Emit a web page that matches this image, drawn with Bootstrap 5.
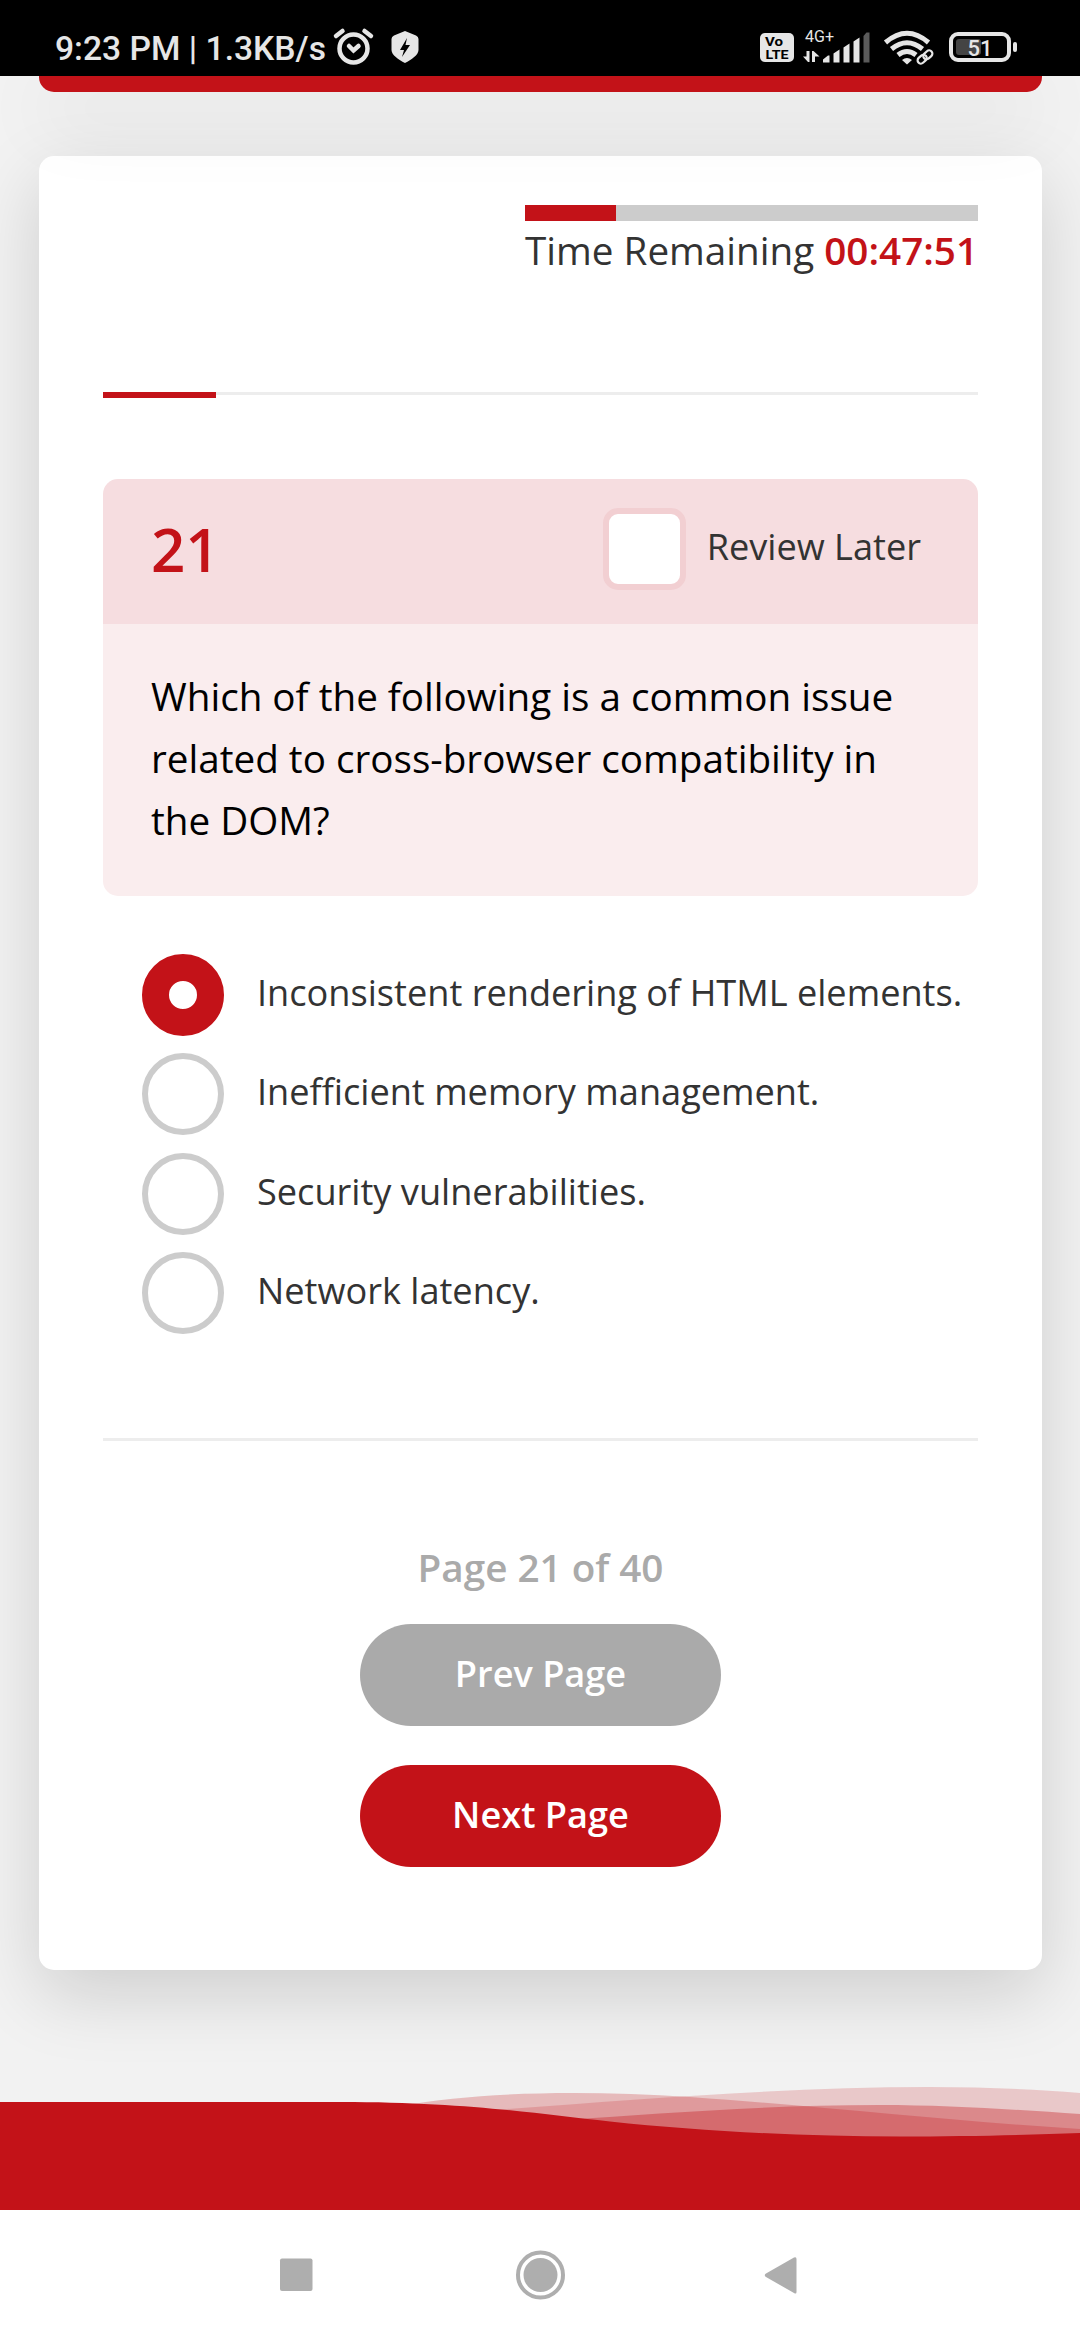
<!DOCTYPE html>
<html lang="en">
<head>
<meta charset="utf-8">
<meta name="viewport" content="width=device-width, initial-scale=1">
<title>Assessment</title>
<link href="https://cdn.jsdelivr.net/npm/bootstrap@5.3.0/dist/css/bootstrap.min.css" rel="stylesheet">
<style>
:root{--brand:#c31218;--muted:#aaa;--lift:0 24px 72px rgba(0,0,0,.15)}
body{width:1080px;height:2340px;overflow:hidden;background:#f2f2f2;font-family:"Open Sans",sans-serif;font-size:36.15px;color:#333;line-height:54px}
svg{display:block;flex:none}
.statusbar{height:76px;background:#000;z-index:3}
.statusbar svg{font-family:Roboto,sans-serif}
.topstrip{height:16px;margin:0 38px 0 39px;background:var(--brand);border-radius:0 0 15px 15px;box-shadow:var(--lift);z-index:2}
.quiz{height:1814px;margin:64px 38px 0 39px;padding:49px 64px 0;border-radius:15px;box-shadow:var(--lift)}
.timer{width:453px;font-size:38.65px;line-height:60px}
.timer .progress{--bs-progress-height:16px;--bs-progress-bg:#ccc;--bs-progress-bar-bg:var(--brand);--bs-progress-border-radius:0}
.timer-text{margin-top:-1px}
.timer strong,.brandtext{color:var(--brand);font-weight:600}
.steps{height:6px;margin-top:112px;border-top:3px solid #ededed}
.steps div{height:6px;margin-top:-3px;background:var(--brand)}
.question{margin-top:81px;border-radius:15px}
.question-head{height:145px;padding:0 57px 6px 48px;background:#f6dde0}
.num{font-size:60px;line-height:1}
.question .form-check-input{width:83px;height:82px;border:6px solid #f2cfd2;border-radius:15px;margin:0 21px 0 0}
.question-body{height:272px;padding:41px 48px 0;background:#faedee;color:#000;font-size:38.65px;line-height:62px}
.answers{margin:58px 0 0 39px}
.answers label{height:82px;margin-bottom:17.4px}
.answers .form-check-input{width:82px;height:82px;border:6px solid #ccc;margin:0 33px 0 0;flex:none}
.answers .form-check-input:checked{border:27px solid var(--brand);background:#fff}
.lbl{margin-top:-6px}
.rule{height:3px;margin-top:86px;background:#ededed}
.pageno{margin-top:96px;font-size:38.65px;line-height:60px;font-weight:600;color:var(--muted)}
.pill{--bs-btn-color:#fff;--bs-btn-bg:var(--brand);--bs-btn-border-width:0;--bs-btn-font-weight:600;--bs-btn-font-size:36.15px;--bs-btn-padding-y:0;width:361px;height:102px;padding-bottom:2px}
.pill-muted{--bs-btn-bg:var(--muted);margin:27px 0 39px}
.waves{height:140px;margin-top:100px}
.navkeys{height:130px;background:#fff}
</style>
</head>
<body>
<header class="statusbar position-relative">
<svg width="1080" height="76" fill="#e6e6e6">
<text x="55" y="60" font-size="33.5" font-weight="500" textLength="271" lengthAdjust="spacingAndGlyphs">9:23 PM | 1.3KB/s</text>
<g fill="none" stroke="#e6e6e6" stroke-width="4.500" stroke-linecap="round"><circle cx="353.500" cy="48.500" r="14"/><path d="M349 46l4.500 4.500 5-4.500M336 36l6.500-5M371 36l-6.500-5"/></g>
<path d="M405 31l11 4.500q2.500 1 2.500 3.500v11c0 5-7 9.500-13.500 13-6.500-3.500-13.500-8-13.500-13v-11q0-2.500 2.500-3.500z"/><path d="M407 38l-7 12h4l-2 7 8-12h-4.500z" fill="#000"/>
<rect x="760" y="33" width="34" height="29" rx="5"/>
<g fill="#000" font-weight="700" font-size="12.500"><text x="765" y="46" textLength="18" lengthAdjust="spacingAndGlyphs">Vo</text><text x="765.500" y="59" textLength="23" lengthAdjust="spacingAndGlyphs">LTE</text></g>
<text x="805" y="42" font-size="16" textLength="29" lengthAdjust="spacingAndGlyphs">4G+</text>
<path d="M803 56.500h3.500v-5.500h3v11h-1.500zM812 62v-11h1.500l6 5.500h-4.500v5.500z"/>
<path d="M823 62.500v-3l5-4h1.500v7zM833.500 62.500v-9l6-4v13zM843.500 62.500v-15l6-4v19zM853.500 62.500v-21l6-4v25z"/><path d="M863.500 62.500v-26.500l3-3.500h3v30z" fill="#5b5b5b"/>
<g fill="none" stroke="#e6e6e6" stroke-width="5"><path d="M885.500 42.500q21.500-18.500 43 0M891.500 49q15.500-12.500 31 0M898 55q9-7 18 0"/></g><path d="M902 60q5-4 10 0l-5 4.500z"/>
<circle cx="926" cy="58" r="7.500" fill="#000"/>
<g fill="none" stroke="#e6e6e6" stroke-width="2.200"><rect x="917" y="56" width="10" height="6.500" rx="3.250" transform="rotate(-42 922 59)"/><rect x="923" y="51.500" width="10" height="6.500" rx="3.250" transform="rotate(-42 928 55)"/></g>
<rect x="951" y="34" width="58" height="26" rx="7" fill="none" stroke="#e6e6e6" stroke-width="4"/><rect x="956" y="39" width="25" height="16" rx="3" fill="#444"/><rect x="1013" y="42" width="4" height="10" rx="2"/>
<text x="967.500" y="55.500" font-size="22" font-weight="500">51</text>
</svg>
</header>
<div class="topstrip position-relative"></div>
<main class="quiz card border-0">
<div class="timer ms-auto">
<div class="progress"><div class="progress-bar" style="width:20%"></div></div>
<div class="timer-text text-nowrap">Time Remaining <strong>00:47:51</strong></div>
</div>
<div class="steps"><div style="width:12.9%"></div></div>
<section class="question overflow-hidden">
<div class="question-head d-flex justify-content-between align-items-center">
<div class="num brandtext">21</div>
<label class="d-flex align-items-center"><input class="form-check-input" type="checkbox"><span class="lbl">Review Later</span></label>
</div>
<div class="question-body">Which of the following is a common issue related to cross-browser compatibility in the DOM?</div>
</section>
<div class="answers d-flex flex-column">
<label class="d-flex align-items-center"><input class="form-check-input" type="radio" name="answer" checked><span class="lbl">Inconsistent rendering of HTML elements.</span></label>
<label class="d-flex align-items-center"><input class="form-check-input" type="radio" name="answer"><span class="lbl">Inefficient memory management.</span></label>
<label class="d-flex align-items-center"><input class="form-check-input" type="radio" name="answer"><span class="lbl">Security vulnerabilities.</span></label>
<label class="d-flex align-items-center"><input class="form-check-input" type="radio" name="answer"><span class="lbl">Network latency.</span></label>
</div>
<div class="rule"></div>
<div class="d-flex flex-column align-items-center">
<div class="pageno">Page 21 of 40</div>
<button type="button" class="btn pill pill-muted rounded-pill">Prev Page</button>
<button type="button" class="btn pill rounded-pill">Next Page</button>
</div>
</main>
<div class="waves">
<svg width="1080" height="140" viewBox="0 2070 1080 140" fill="#c31218">
<path fill-opacity=".25" d="M400 2106C480 2092 580 2090 690 2097C830 2107 950 2121 1080 2129V2210H400z"/>
<path fill-opacity=".184" d="M480 2111C620 2101 780 2087 930 2087C985 2087 1035 2089.500 1080 2093V2210H480z"/>
<path fill-opacity=".346" d="M560 2120C660 2114 760 2105 880 2105C950 2105 1020 2110 1080 2114V2210H560z"/>
<path d="M0 2102H325C460 2101 530 2113 610 2121.500C700 2131 800 2136.500 900 2136.500C965 2136.500 1030 2135 1080 2133V2210H0z"/>
</svg>
</div>
<nav class="navkeys d-flex justify-content-center">
<svg width="1080" height="130" fill="#aeaeae">
<rect x="280" y="48.500" width="32.500" height="32.500" rx="2"/>
<circle cx="540.500" cy="65" r="17"/><circle cx="540.500" cy="65" r="22.500" fill="none" stroke="#aeaeae" stroke-width="4"/>
<path d="M766 63.500L794 47.500Q796.500 46.500 796.500 49V82Q796.500 84.500 794 83L766 67Q763.500 65 766 63.500z"/>
</svg>
</nav>
<script src="https://cdn.jsdelivr.net/npm/bootstrap@5.3.0/dist/js/bootstrap.bundle.min.js"></script>
</body>
</html>
